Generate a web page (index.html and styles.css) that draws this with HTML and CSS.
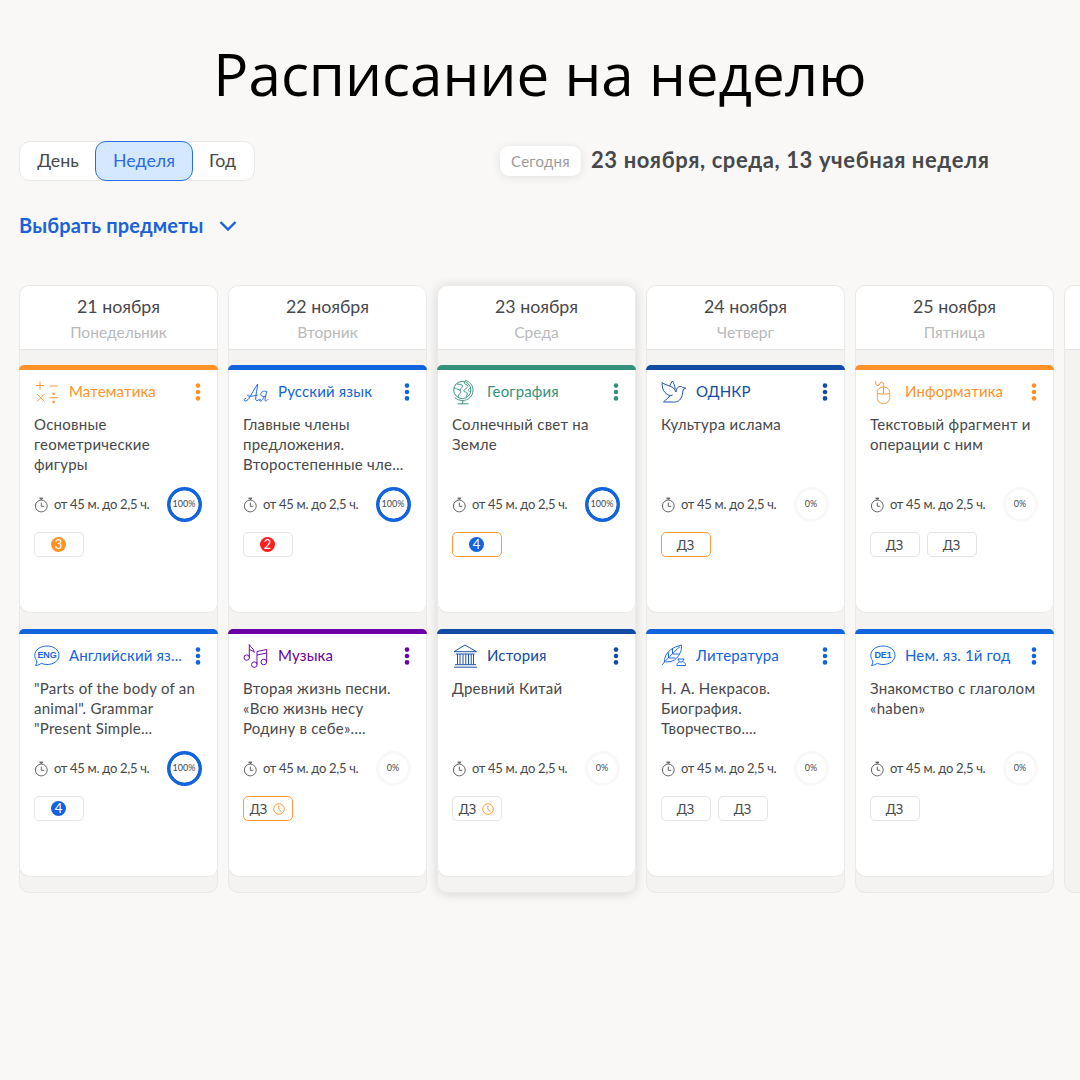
FILE: index.html
```html
<!DOCTYPE html>
<html lang="ru">
<head>
<meta charset="utf-8">
<title>Расписание на неделю</title>
<link rel="stylesheet" href="styles.css">
</head>
<body>
<svg class="sprite" aria-hidden="true">
  <symbol id="timer" viewBox="0 0 14 16"><g fill="none" stroke="#666"><circle cx="7.300" cy="9" r="5.900"/><path d="M7.300 5.600v3.700h3M7.300 3V1.500"/><path d="M5.500 1.400h3.600" stroke-width="1.600"/></g></symbol>
  <symbol id="clock" viewBox="0 0 12 12"><g fill="none" stroke="#ff9228" stroke-width=".9"><circle cx="6" cy="6" r="5.300"/><path d="M5.800 2.500V6l2.300 2.800"/></g></symbol>
  <symbol id="dots" viewBox="0 0 6 18"><g fill="currentColor"><circle cx="3" cy="2.600" r="2.300"/><circle cx="3" cy="9" r="2.300"/><circle cx="3" cy="15.400" r="2.300"/></g></symbol>
  <symbol id="math" viewBox="0 0 26 26"><path d="M2 6.500h8M6 2.500v8M15.500 7h8.500M3 15l7.500 7.500M10.500 15L3 22.500M15.500 18.700h8.500"/><circle cx="19.700" cy="14.800" r=".9" fill="currentColor"/><circle cx="19.700" cy="23" r=".9" fill="currentColor"/></symbol>
  <symbol id="letters" viewBox="0 0 26 26"><path d="M3 19.500c-1.800-.5-2.500 1.500-1.200 2.300 1.500.8 3-.8 4-2.300C8.500 15.500 11.500 9.500 14.700 5c-.5 5-2 10.500-2 15 0 2.500 2.300 2 4-.2M5 15.500c-1.500 2 2 2.200 9.500.7M23.800 12.500c-.7 3-1.800 6-1.800 8.500 0 1.700 1.800 1 3-.7M23.800 12.500c-3.300-1-6 .5-6 2.800 0 2 2.200 2.500 5 1.900M21 17.500c-1.200 3.500-2.700 5-4 4.500-1-.5-.3-2 .8-1.200"/></symbol>
  <symbol id="globe" viewBox="0 0 26 26"><circle cx="10.300" cy="11" r="8.600"/><path d="M13 1.200c4.500 1 8 5 8 10 0 6-4.500 10.300-10.500 10.300-3 0-5.500-1-7.500-3M10.800 21.500v3.200M5.500 24.800h11M5 5c3 .5 5 0 5.500 2 .5 2-3 2-2.500 4.500M2 9c2 0 3 1.500 5.500 2 2.500 1 1 3-.5 4.500-.8 1-.8 2-1 2.500M13 2.500c-1.500 1.500 0 3 1.500 3l1.500 2-2.500 2.500c-2 1-2 3 0 3 1.500 0 2 1 1.500 3l-1 2M18.700 9c-2 .5-3 1.800-1.200 3.800"/></symbol>
  <symbol id="dove" viewBox="0 0 26 26"><path d="M1.200 3.500c2 2 5 2.500 8.800 4 2.500 1.200 4 3 5 5.500.3-3.500 1.700-5.500 4.200-5.500 1.700 0 2.300.6 2.500 1.100l3 .5-2.500 1.700c-.7 2.500-.5 6.500-2.700 9.200-2.200 3-5 3.300-8.500 3H2.500l6.700-6.300C3 14.500.8 10 1.200 3.500zM8.500 7c1-1.800 2-3.600 2.900-5 1.300 2 2.500 4.500 2.800 8.500M9.200 16.700l2.500-.7"/></symbol>
  <symbol id="mouse" viewBox="0 0 26 26"><path d="M7.300 13.500c0-3.300 2.700-5.500 6.200-5.500s6.200 2.200 6.200 5.500v5c0 3.700-2.700 6.200-6.200 6.200s-6.200-2.500-6.200-6.200zM7.500 14.500c4 .8 8 .8 12 0M13.500 8v6.500M13.500 8c.3-2 .3-5-2-5-2.300 0-1.300 3.700-3.500 3.700-2.300 0-2.200-2.500-2.500-4.700"/></symbol>
  <symbol id="bubble" viewBox="0 0 26 26"><path d="M1.500 22.500c1-1.500 1.600-3 1.300-4.700C1.500 16.200.8 14.500.8 12.300.8 7 6 3 13 3s12 4 12 9.300-5 9.200-12 9.200c-2.200 0-4-.4-5.700-1.200-1.500 1-3.500 2-5.800 2.200z"/></symbol>
  <symbol id="music" viewBox="0 0 26 26"><circle cx="3.700" cy="14.600" r="2.700"/><path d="M6.300 14.500V1.500c1 3 4.700 3.500 5 8-1.200-1.700-2.800-2.400-5-2.700"/><circle cx="11.300" cy="21.600" r="2.800"/><circle cx="20.800" cy="19" r="2.800"/><path d="M14 21.500V8.500L23.700 6.500v12.500M14 12l9.700-2"/></symbol>
  <symbol id="museum" viewBox="0 0 26 26"><path d="M2 8.700L13 2l11.500 6.700zM4 11h18.500M5.500 11v10.500M8 11v10.500M11 11v10.500M13.800 11v10.500M16.500 11v10.500M19.200 11v10.500M21.500 11v10.500M3 21.700h21M2 24.200h23"/></symbol>
  <symbol id="quill" viewBox="0 0 26 26"><path d="M1 22C5 17 12 10 19 3.500M3.500 19C3 12.500 8 6.500 14.500 4L20.500 2c.5 5-1.700 10-5 13.300-2.500 2.400-6 3.700-11 3.700M7.500 15V9.500M11.500 11V5.500M8 15h6.500M12 11h6.500M17 16h6l-1.500 3h-3zM18 19c-1 .5-2.500 1.700-2 3.500h8.500c.3-1.800-1-3-2-3.500"/></symbol>
</svg>
<main class="page">
  <h1 class="title">Расписание на неделю</h1>
  <div class="toolbar">
    <nav class="period">
      <button class="period-item">День</button>
      <button class="period-item period-active">Неделя</button>
      <button class="period-item">Год</button>
    </nav>
    <button class="today">Сегодня</button>
    <p class="date">23 ноября, среда, 13 учебная неделя</p>
  </div>
  <button class="subjects">Выбрать предметы<svg class="chevron" viewBox="0 0 18 12"><path d="M1.500 2l7.500 7.500L16.500 2"/></svg></button>

  <section class="week">
    <article class="day">
      <header class="day-head"><h2 class="day-date">21 ноября</h2><p class="day-name">Понедельник</p></header>
      <div class="lesson orange">
        <div class="lesson-head"><svg class="icon"><use href="#math"/></svg><h3 class="subject">Математика</h3><svg class="dots"><use href="#dots"/></svg></div>
        <p class="topic">Основные<br>геометрические<br>фигуры</p>
        <div class="meta"><svg class="timer"><use href="#timer"/></svg><span class="time">от 45 м. до 2,5 ч.</span><span class="ring full">100%</span></div>
        <div class="tags"><span class="tag"><b class="mark mark-3">3</b></span></div>
      </div>
      <div class="lesson blue">
        <div class="lesson-head"><span class="lang"><svg class="icon"><use href="#bubble"/></svg><span class="lang-code">ENG</span></span><h3 class="subject">Английский яз...</h3><svg class="dots"><use href="#dots"/></svg></div>
        <p class="topic">"Parts of the body of an<br>animal". Grammar<br>"Present Simple...</p>
        <div class="meta"><svg class="timer"><use href="#timer"/></svg><span class="time">от 45 м. до 2,5 ч.</span><span class="ring full">100%</span></div>
        <div class="tags"><span class="tag"><b class="mark mark-4">4</b></span></div>
      </div>
    </article>

    <article class="day">
      <header class="day-head"><h2 class="day-date">22 ноября</h2><p class="day-name">Вторник</p></header>
      <div class="lesson blue">
        <div class="lesson-head"><svg class="icon"><use href="#letters"/></svg><h3 class="subject">Русский язык</h3><svg class="dots"><use href="#dots"/></svg></div>
        <p class="topic">Главные члены<br>предложения.<br>Второстепенные чле...</p>
        <div class="meta"><svg class="timer"><use href="#timer"/></svg><span class="time">от 45 м. до 2,5 ч.</span><span class="ring full">100%</span></div>
        <div class="tags"><span class="tag"><b class="mark mark-2">2</b></span></div>
      </div>
      <div class="lesson purple">
        <div class="lesson-head"><svg class="icon"><use href="#music"/></svg><h3 class="subject">Музыка</h3><svg class="dots"><use href="#dots"/></svg></div>
        <p class="topic">Вторая жизнь песни.<br>«Всю жизнь несу<br>Родину в себе»....</p>
        <div class="meta"><svg class="timer"><use href="#timer"/></svg><span class="time">от 45 м. до 2,5 ч.</span><span class="ring">0%</span></div>
        <div class="tags"><span class="tag tag-due">ДЗ<svg class="clock"><use href="#clock"/></svg></span></div>
      </div>
    </article>

    <article class="day day-current">
      <header class="day-head"><h2 class="day-date">23 ноября</h2><p class="day-name">Среда</p></header>
      <div class="lesson green">
        <div class="lesson-head"><svg class="icon"><use href="#globe"/></svg><h3 class="subject">География</h3><svg class="dots"><use href="#dots"/></svg></div>
        <p class="topic">Солнечный свет на<br>Земле</p>
        <div class="meta"><svg class="timer"><use href="#timer"/></svg><span class="time">от 45 м. до 2,5 ч.</span><span class="ring full">100%</span></div>
        <div class="tags"><span class="tag tag-due"><b class="mark mark-4">4</b></span></div>
      </div>
      <div class="lesson navy">
        <div class="lesson-head"><svg class="icon"><use href="#museum"/></svg><h3 class="subject">История</h3><svg class="dots"><use href="#dots"/></svg></div>
        <p class="topic">Древний Китай</p>
        <div class="meta"><svg class="timer"><use href="#timer"/></svg><span class="time">от 45 м. до 2,5 ч.</span><span class="ring">0%</span></div>
        <div class="tags"><span class="tag">ДЗ<svg class="clock"><use href="#clock"/></svg></span></div>
      </div>
    </article>

    <article class="day">
      <header class="day-head"><h2 class="day-date">24 ноября</h2><p class="day-name">Четверг</p></header>
      <div class="lesson navy">
        <div class="lesson-head"><svg class="icon"><use href="#dove"/></svg><h3 class="subject">ОДНКР</h3><svg class="dots"><use href="#dots"/></svg></div>
        <p class="topic">Культура ислама</p>
        <div class="meta"><svg class="timer"><use href="#timer"/></svg><span class="time">от 45 м. до 2,5 ч.</span><span class="ring">0%</span></div>
        <div class="tags"><span class="tag tag-due">ДЗ</span></div>
      </div>
      <div class="lesson blue">
        <div class="lesson-head"><svg class="icon"><use href="#quill"/></svg><h3 class="subject">Литература</h3><svg class="dots"><use href="#dots"/></svg></div>
        <p class="topic">Н. А. Некрасов.<br>Биография.<br>Творчество....</p>
        <div class="meta"><svg class="timer"><use href="#timer"/></svg><span class="time">от 45 м. до 2,5 ч.</span><span class="ring">0%</span></div>
        <div class="tags"><span class="tag">ДЗ</span><span class="tag">ДЗ</span></div>
      </div>
    </article>

    <article class="day">
      <header class="day-head"><h2 class="day-date">25 ноября</h2><p class="day-name">Пятница</p></header>
      <div class="lesson orange">
        <div class="lesson-head"><svg class="icon"><use href="#mouse"/></svg><h3 class="subject">Информатика</h3><svg class="dots"><use href="#dots"/></svg></div>
        <p class="topic">Текстовый фрагмент и<br>операции с ним</p>
        <div class="meta"><svg class="timer"><use href="#timer"/></svg><span class="time">от 45 м. до 2,5 ч.</span><span class="ring">0%</span></div>
        <div class="tags"><span class="tag">ДЗ</span><span class="tag">ДЗ</span></div>
      </div>
      <div class="lesson blue">
        <div class="lesson-head"><span class="lang"><svg class="icon"><use href="#bubble"/></svg><span class="lang-code">DE1</span></span><h3 class="subject">Нем. яз. 1й год</h3><svg class="dots"><use href="#dots"/></svg></div>
        <p class="topic">Знакомство с глаголом<br>«haben»</p>
        <div class="meta"><svg class="timer"><use href="#timer"/></svg><span class="time">от 45 м. до 2,5 ч.</span><span class="ring">0%</span></div>
        <div class="tags"><span class="tag">ДЗ</span></div>
      </div>
    </article>

    <article class="day"><header class="day-head"></header></article>
  </section>
</main>
</body>
</html>
```

FILE: styles.css
```css
* { box-sizing: border-box; }
html, body { margin: 0; }
body {
  height: 1080px;
  overflow: hidden;
  background: #f9f8f6;
  color: #46484c;
  font-family: Lato, "Open Sans", sans-serif;
}
h1, h2, h3, p { margin: 0; font-weight: 400; }
button { font: inherit; color: inherit; border: 0; background: none; padding: 0; }
.sprite { display: none; }
.page { height: 1080px; padding: 39px 0 0 19px; overflow: hidden; }

.title {
  margin-left: -19px;
  height: 70px;
  line-height: 70px;
  text-align: center;
  font-family: "Open Sans", sans-serif;
  font-size: 58.35px;
  color: #000;
  white-space: nowrap;
}

.toolbar { display: flex; align-items: center; height: 40px; margin-top: 32px; }
.period {
  display: flex;
  width: 236px;
  height: 40px;
  border: 1px solid #e8e8e7;
  border-radius: 11px;
  background: #fff;
  font-size: 17.8px;
}
.period-item { flex: 1; padding-bottom: 2px; }
.period-active {
  flex: 0 0 98px;
  margin: -1px 0;
  border: 1px solid #2a72df;
  border-radius: 11px;
  background: #d4e9ff;
  color: #2a6be0;
}
.period-item:first-child { flex: 0 0 75px; padding-left: 1px; }
.period-item:last-child { padding-right: 2px; }
.today {
  width: 81px;
  height: 30px;
  margin-left: 245px;
  padding-bottom: 1px;
  border-radius: 9px;
  background: #fff;
  box-shadow: 0 1px 10px rgba(0, 0, 0, .1);
  color: #9b9b9b;
  font-size: 15px;
  letter-spacing: .3px;
}
.date {
  margin-left: 10px;
  padding-bottom: 3px;
  font-size: 22px;
  font-weight: 700;
  letter-spacing: .6px;
  white-space: nowrap;
}

.subjects {
  display: flex;
  align-items: center;
  gap: 15px;
  height: 30px;
  margin-top: 29px;
  color: #1b62da;
  font-size: 20px;
  font-weight: 700;
  letter-spacing: .17px;
}
.chevron { width: 18px; height: 12px; margin-top: 2px; fill: none; stroke: currentColor; stroke-width: 2.4; }

.week { display: flex; gap: 10px; height: 613px; margin-top: 45px; padding: 0; }
.day {
  flex: 0 0 199px;
  height: 608px;
  border: 1px solid #e8e8e7;
  border-radius: 10px;
  background: #f4f3f1;
}
.day-current { border-color: #ebeae8; box-shadow: 0 1px 12px rgba(0, 0, 0, .15); }
.day-head {
  height: 64px;
  padding-top: 8px;
  border-bottom: 1px solid #e2e2e1;
  border-radius: 9px 9px 0 0;
  background: #fff;
  text-align: center;
}
.day-date { font-size: 17.8px; line-height: 24px; }
.day-name { margin-top: 3px; font-size: 15.5px; line-height: 22px; color: #b9b9ba; }

.lesson {
  height: 248px;
  margin: 15px -1px 16px;
  padding: 9px 15px 0;
  border-top: 5px solid var(--accent);
  border-radius: 5px 5px 10px 10px;
  background: #fff;
  box-shadow: inset 1px -1px #e9e9e8, inset -1px 0 #e9e9e8;
  font-size: 15px;
}
.orange { --accent: #ff9228; }
.blue { --accent: #1164dd; }
.purple { --accent: #6800a5; }
.green { --accent: #34927c; }
.navy { --accent: #124ba3; }

.lesson-head { display: flex; align-items: center; height: 26px; color: var(--accent); }
.icon { display: block; flex: none; width: 26px; height: 26px; fill: none; stroke: var(--accent); stroke-width: .95; }
.lang { display: grid; flex: none; place-items: center; }
.lang > * { grid-area: 1 / 1; }
.lang-code { margin-top: -2px; font-family: "Liberation Sans", sans-serif; font-size: 9px; font-weight: 700; line-height: 10px; letter-spacing: -.2px; }
.subject { flex: 1; margin-left: 9px; padding-bottom: 2px; font-size: 15px; letter-spacing: .15px; white-space: nowrap; }
.dots { flex: none; width: 6px; height: 18px; margin-right: 2.5px; }
.topic { height: 60px; margin-top: 9px; line-height: 20px; letter-spacing: .25px; white-space: nowrap; }
.meta { display: flex; align-items: center; height: 35px; margin-top: 13px; font-size: 13px; }
.timer { flex: none; width: 14px; height: 16px; }
.time { margin-left: 6px; padding-bottom: 1px; letter-spacing: -.3px; white-space: nowrap; }
.ring {
  display: grid;
  place-items: center;
  width: 35px;
  height: 35px;
  margin: 0 1.5px 0 auto;
  padding-bottom: 2px;
  border: 3.5px solid #f9f8f7;
  border-radius: 50%;
  font-size: 9px;
}
.full { border: 0; background: radial-gradient(circle, transparent 13.7px, #1164dd 14.3px); }
.tags { display: flex; gap: 7px; margin-top: 10px; }
.tag {
  display: flex;
  align-items: center;
  justify-content: center;
  gap: 6px;
  width: 50px;
  height: 25px;
  padding-right: 1px;
  border: 1px solid #e4e4e4;
  border-radius: 5px;
  font-size: 13px;
}
.tag-due { border-color: #ff9a38; }
.clock { width: 12px; height: 12px; }
.mark {
  width: 15px;
  height: 15px;
  border-radius: 50%;
  color: #fff;
  font-size: 13px;
  font-weight: 400;
  line-height: 15px;
  text-align: center;
}
.mark-2 { background: #fa1e1e; }
.mark-3 { background: #ff9228; }
.mark-4 { background: #1164dd; }
```
